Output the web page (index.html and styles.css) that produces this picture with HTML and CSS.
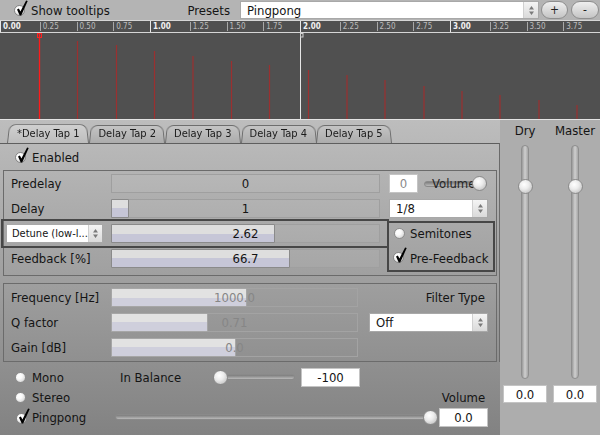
FILE: index.html
```html
<!DOCTYPE html>
<html>
<head>
<meta charset="utf-8">
<link rel="stylesheet" href="styles.css">
</head>
<body>
<svg class="defs" aria-hidden="true">
  <defs>
    <symbol id="tick" viewBox="0 0 14 16">
      <path d="M3 9.5 L4.9 8.6 L6.4 11.5 L12.1 0.4 L13.7 1.1 L7.2 15.6 L5.7 15.6 Z" fill="#000"/>
    </symbol>
    <symbol id="ud" viewBox="0 0 7 11">
      <path d="M3.5 1 L6 4.4 H1 Z M3.5 10 L6 6.6 H1 Z" fill="#7a7a7a"/>
    </symbol>
  </defs>
</svg>
<div class="app">
  <header class="topbar">
    <label class="check tooltips"><span class="cb"><span class="ball"></span><svg class="tick"><use href="#tick"/></svg></span><span>Show tooltips</span></label>
    <span class="presets">Presets</span>
    <div class="combo preset-combo"><span class="combo-text">Pingpong</span><span class="combo-arrow"><svg class="ud"><use href="#ud"/></svg></span></div>
    <button class="pill">+</button>
    <button class="pill">-</button>
  </header>

  <section class="timeline">
    <div class="ruler">
      <div class="major"><span class="cell big">0.00</span><span class="cell minor">0.25</span><span class="cell minor">0.50</span><span class="cell minor">0.75</span></div>
      <div class="major"><span class="cell big">1.00</span><span class="cell minor">1.25</span><span class="cell minor">1.50</span><span class="cell minor">1.75</span></div>
      <div class="major"><span class="cell big">2.00</span><span class="cell minor">2.25</span><span class="cell minor">2.50</span><span class="cell minor">2.75</span></div>
      <div class="major"><span class="cell big">3.00</span><span class="cell minor">3.25</span><span class="cell minor">3.50</span><span class="cell minor">3.75</span></div>
    </div>
    <svg class="graph" width="600" height="86" viewBox="0 0 600 86">
      <g stroke="#9b3030" stroke-width="1.2">
        <line x1="77.5" y1="8" x2="77.5" y2="86"/>
        <line x1="116.5" y1="12" x2="116.5" y2="86"/>
        <line x1="154.5" y1="18" x2="154.5" y2="86"/>
        <line x1="193" y1="23" x2="193" y2="86"/>
        <line x1="231.5" y1="28" x2="231.5" y2="86"/>
        <line x1="269.5" y1="32" x2="269.5" y2="86"/>
        <line x1="308.5" y1="37" x2="308.5" y2="86"/>
        <line x1="347" y1="42" x2="347" y2="86"/>
        <line x1="385" y1="47" x2="385" y2="86"/>
        <line x1="424" y1="53" x2="424" y2="86"/>
        <line x1="462" y1="58" x2="462" y2="86"/>
        <line x1="500" y1="62" x2="500" y2="86"/>
        <line x1="539" y1="67" x2="539" y2="86"/>
        <line x1="577" y1="72" x2="577" y2="86"/>
      </g>
      <line x1="39.5" y1="0" x2="39.5" y2="86" stroke="#ff1a1a" stroke-width="1.3"/>
      <rect x="37.5" y="0.5" width="4" height="4" fill="none" stroke="#ff2020" stroke-width="1"/>
      <line x1="300.5" y1="0" x2="300.5" y2="86" stroke="#e6e6e6" stroke-width="1"/>
      <rect x="300.5" y="0.5" width="2.5" height="3.5" fill="none" stroke="#d0d0d0" stroke-width="1"/>
    </svg>
    <div class="timeline-edge"></div>
  </section>

  <main class="main">
    <div class="left">
      <nav class="tabs">
        <span class="tab active">*Delay Tap 1</span>
        <span class="tab">Delay Tap 2</span>
        <span class="tab">Delay Tap 3</span>
        <span class="tab">Delay Tap 4</span>
        <span class="tab">Delay Tap 5</span>
      </nav>
      <div class="pane">
        <label class="check enabled"><span class="cb"><span class="ball"></span><svg class="tick"><use href="#tick"/></svg></span><span>Enabled</span></label>

        <div class="group g1">
          <div class="row">
            <span class="lbl">Predelay</span>
            <div class="bar"><span class="val">0</span></div>
            <div class="spin spin-small dim">0</div>
            <div class="mini-slider">
              <span class="groove"></span>
              <span class="mini-text">Volume</span>
              <span class="handle"></span>
            </div>
          </div>
          <div class="row">
            <span class="lbl">Delay</span>
            <div class="bar"><span class="fill" style="width:18px"></span><span class="val">1</span></div>
            <div class="combo delay-combo"><span class="combo-text">1/8</span><span class="combo-arrow"><svg class="ud"><use href="#ud"/></svg></span></div>
          </div>
          <div class="split">
            <div class="split-left">
              <div class="row detune">
                <div class="combo detune-combo"><span class="combo-text">Detune (low-l...</span><span class="combo-arrow"><svg class="ud"><use href="#ud"/></svg></span></div>
                <div class="bar"><span class="fill" style="width:164px"></span><span class="val">2.62</span></div>
              </div>
              <div class="row">
                <span class="lbl">Feedback [%]</span>
                <div class="bar"><span class="fill" style="width:179px"></span><span class="val">66.7</span></div>
              </div>
            </div>
            <div class="frame-right">
              <label class="check opt"><span class="radio"></span><span>Semitones</span></label>
              <label class="check opt"><span class="cb"><span class="ball"></span><svg class="tick"><use href="#tick"/></svg></span><span>Pre-Feedback</span></label>
            </div>
          </div>
        </div>

        <div class="group g2">
          <div class="row">
            <span class="lbl">Frequency [Hz]</span>
            <div class="bar off"><span class="fill" style="width:136px"></span><span class="val">1000.0</span></div>
            <span class="filter-label">Filter Type</span>
          </div>
          <div class="row">
            <span class="lbl">Q factor</span>
            <div class="bar off"><span class="fill" style="width:97px"></span><span class="val">0.71</span></div>
            <div class="combo filter-combo"><span class="combo-text">Off</span><span class="combo-arrow"><svg class="ud"><use href="#ud"/></svg></span></div>
          </div>
          <div class="row">
            <span class="lbl">Gain [dB]</span>
            <div class="bar off"><span class="fill" style="width:125px"></span><span class="val">0.0</span></div>
          </div>
        </div>
      </div>

      <div class="bottom">
        <div class="brow">
          <label class="check mode"><span class="radio"></span><span>Mono</span></label>
          <span class="balance-label">In Balance</span>
          <div class="hslider balance"><span class="groove"></span><span class="handle start"></span></div>
          <div class="spin balance-spin">-100</div>
        </div>
        <div class="brow">
          <label class="check mode"><span class="radio"></span><span>Stereo</span></label>
          <span class="volume-label">Volume</span>
        </div>
        <div class="brow">
          <label class="check mode ping"><span class="cb"><span class="ball"></span><svg class="tick"><use href="#tick"/></svg></span><span>Pingpong</span></label>
          <div class="hslider volume"><span class="groove"></span><span class="handle end"></span></div>
          <div class="spin volume-spin">0.0</div>
        </div>
      </div>
    </div>

    <aside class="mixer">
      <div class="mix-col">
        <span class="mix-label">Dry</span>
        <div class="vslider"><span class="handle"></span></div>
        <div class="spin mix-spin">0.0</div>
      </div>
      <div class="mix-col">
        <span class="mix-label">Master</span>
        <div class="vslider"><span class="handle"></span></div>
        <div class="spin mix-spin">0.0</div>
      </div>
    </aside>
  </main>
</div>
</body>
</html>
```

FILE: styles.css
```css
* { box-sizing: border-box; margin: 0; padding: 0; }

body {
  width: 600px;
  height: 435px;
  overflow: hidden;
  font-family: "DejaVu Sans Condensed", "DejaVu Sans", sans-serif;
  font-stretch: condensed;
  font-size: 13px;
  color: #141414;
  background: #b4b4b4;
}

.defs { position: absolute; width: 0; height: 0; }

.app { display: flex; flex-direction: column; height: 435px; }

/* ---------- check / radio ---------- */
.check { display: flex; align-items: center; }

.cb {
  display: grid;
  width: 14px;
  height: 16px;
  flex: none;
}
.cb > * { grid-area: 1 / 1; }
.ball, .radio {
  display: block;
  width: 11px;
  height: 11px;
  border-radius: 50%;
  border: 1px solid #868686;
  background: radial-gradient(circle at 35% 32%, #ffffff 0%, #fafafa 35%, #e0e0e0 68%, #a9a9a9 100%);
}
.ball { align-self: end; justify-self: start; }
.tick { width: 14px; height: 16px; }
.radio { flex: none; border-color: #8e8e8e; }

/* ---------- top bar ---------- */
.topbar {
  height: 20px;
  display: flex;
  align-items: center;
  background: #b4b4b4;
  padding-right: 1px;
}

.tooltips { margin-left: 14px; }
.tooltips .cb { margin-right: 3px; margin-top: -4px; }

.presets { margin-left: auto; margin-right: 10px; }

.combo {
  display: flex;
  align-items: stretch;
  background: #fff;
  border: 1px solid #a8a8a8;
  height: 19px;
}
.combo-text { flex: 1; padding-left: 6px; display: flex; align-items: center; white-space: nowrap; }
.combo-arrow {
  width: 15px;
  display: flex;
  align-items: center;
  justify-content: center;
  background: linear-gradient(#f4f4f4, #dadada);
  border-left: 1px solid #d0d0d0;
}
.ud { width: 7px; height: 11px; }

.preset-combo { width: 299px; height: 18px; margin-right: 2px; }

.pill {
  width: 27px;
  height: 18px;
  border-radius: 9px;
  border: 1px solid #8e8e8e;
  background: linear-gradient(#efefef, #c4c4c4);
  font-family: inherit;
  font-size: 12px;
  color: #222;
  line-height: 16px;
}
.pill + .pill { margin-left: 3px; width: 28px; }

/* ---------- timeline ---------- */
.timeline { background: #505050; height: 100px; }

.ruler {
  display: flex;
  height: 13px;
  border-top: 1px solid #d6d6d6;
  border-bottom: 1px solid #d6d6d6;
  font-size: 8px;
  color: #bdbdbd;
}
.major { width: 150px; display: flex; border-left: 1px solid #e8e8e8; }
.cell { flex: 1; display: flex; align-items: center; padding-left: 2px; line-height: 11px; }
.cell.big { font-weight: bold; color: #f2f2f2; padding-left: 2px; }
.cell.minor { padding-left: 0; }
.cell.minor::before {
  content: "";
  width: 1px;
  height: 9px;
  background: #a8a8a8;
  margin-right: 2px;
}

.graph { display: block; }
.timeline-edge { height: 1px; background: #e2e2e2; }

/* ---------- main ---------- */
.main { flex: 1; display: flex; min-height: 0; }

.left {
  width: 500px;
  display: flex;
  flex-direction: column;
  background: linear-gradient(#bdbdbd, #828282);
}

.tabs {
  height: 23px;
  display: flex;
  align-items: flex-end;
  padding-left: 7px;
}
.tab {
  position: relative;
  z-index: 0;
  height: 19px;
  padding: 0 9px;
  font-size: 11px;
  display: flex;
  align-items: center;
  color: #1a1a1a;
  white-space: nowrap;
}
.tab::before {
  content: "";
  position: absolute;
  inset: 0;
  border: 1px solid #6e6e6e;
  border-bottom: 0;
  border-radius: 7px 7px 0 0;
  background: linear-gradient(#c4c4c4, #acacac);
  transform: perspective(30px) rotateX(5deg);
  transform-origin: bottom;
  z-index: -1;
}
.tab.active { height: 20px; z-index: 1; padding: 0 10px; }
.tab.active::before { background: linear-gradient(#d0d0d0, #bdbdbd); }

.pane {
  flex: none;
  border-top: 1px solid #5e5e5e;
  border-right: 1px solid #6a6a6a;
}

.enabled { height: 26px; padding-left: 15px; }
.enabled .cb { margin-right: 3px; margin-top: -4px; }

.group {
  margin-left: 3px;
  width: 494px;
  border: 1px solid #6b6b6b;
  display: flex;
  flex-direction: column;
  gap: 6px;
}
.g1 { padding: 3px 0 7px; }
.g2 { margin-top: 7px; padding: 4px 0 4px; }

.row { display: flex; align-items: center; height: 19px; flex: none; }
.lbl { width: 107px; padding-left: 7px; flex: none; white-space: nowrap; }

.bar {
  display: grid;
  width: 269px;
  height: 19px;
  flex: none;
  box-shadow: inset 0 0 0 1px #9f9f9f;
  background: rgba(255, 255, 255, 0.06);
}
.bar > * { grid-area: 1 / 1; }
.fill {
  justify-self: start;
  height: 19px;
  border: 1px solid #8a8a8a;
  border-radius: 1px;
  background: linear-gradient(#dedede 50%, #c6c6d7 50%);
}
.val { justify-self: center; align-self: center; line-height: 17px; }

.bar.off { width: 247px; box-shadow: inset 0 0 0 1px #a3a3a3; background: none; }
.bar.off .fill { border-color: #a6a6a6; background: linear-gradient(#e2e2e2 50%, #cfcfdc 50%); }
.bar.off .val { color: #868686; }

.spin {
  background: #fff;
  border: 1px solid #c4c4c4;
  display: flex;
  align-items: center;
  justify-content: center;
  height: 19px;
  flex: none;
}
.spin-small { width: 29px; margin-left: 9px; }
.dim { color: #8a8a8a; }

.mini-slider {
  display: grid;
  width: 63px;
  margin-left: 6px;
  align-items: center;
}
.mini-slider > * { grid-area: 1 / 1; }
.mini-slider .groove { height: 6px; }
.mini-text { padding-left: 8px; color: #262626; }
.mini-slider .handle { justify-self: end; }

.groove {
  display: block;
  height: 6px;
  border-radius: 3px;
  background: linear-gradient(#7c7c7c, #b9b9b9);
  border: 1px solid #8a8a8a;
}
.handle {
  display: block;
  width: 15px;
  height: 15px;
  border-radius: 50%;
  border: 1px solid #8a8a8a;
  background: radial-gradient(circle at 40% 35%, #ffffff 0%, #ececec 40%, #b4b4b4 100%);
  flex: none;
}

.delay-combo { width: 99px; margin-left: 9px; }

.split { display: flex; }
.split-left { width: 383px; display: flex; flex-direction: column; gap: 6px; }
.detune { outline: 2px solid #474747; outline-offset: 3px; margin-left: 2px; width: 378px; }
.detune-combo { width: 97px; font-size: 11px; margin-right: 8px; }
.detune-combo .combo-text { padding-left: 5px; }

.frame-right {
  width: 108px;
  margin: -3px 0 -4px;
  border: 2px solid #474747;
  border-left-color: transparent;
  position: relative;
  display: flex;
  flex-direction: column;
  gap: 6px;
  padding: 1px 0 0 5px;
}
.frame-right::before {
  content: "";
  position: absolute;
  left: -2px;
  top: 23px;
  bottom: -2px;
  width: 2px;
  background: #474747;
}
.opt { height: 19px; }
.opt .radio { margin-right: 5px; }
.opt .cb { margin-left: -1px; margin-right: 3px; margin-top: -7px; }

.filter-label { margin-left: auto; margin-right: 11px; }
.filter-combo { width: 119px; margin-left: 11px; }

/* ---------- bottom ---------- */
.bottom { flex: 1; display: flex; flex-direction: column; padding-top: 5px; }
.brow { display: flex; align-items: center; height: 20px; flex: none; }
.mode { width: 120px; padding-left: 15px; flex: none; }
.mode .radio { margin-right: 6px; }
.ping { width: 115px; padding-left: 16px; }
.ping .cb { margin-right: 2px; margin-top: -3px; }

.balance-label { width: 93px; flex: none; }
.hslider { display: grid; align-items: center; flex: none; }
.hslider > * { grid-area: 1 / 1; }
.hslider .groove { height: 6px; }
.handle.start { justify-self: start; }
.handle.end { justify-self: end; }
.balance { width: 82px; }
.balance-spin { width: 59px; margin-left: 6px; }
.volume { width: 323px; }
.volume-spin { width: 49px; margin-left: 1px; }
.volume-label { margin-left: auto; width: 49px; margin-right: 12px; text-align: center; }

/* ---------- mixer ---------- */
.mixer { flex: 1; display: flex; background: #adadad; }
.mix-col { width: 50px; display: flex; flex-direction: column; align-items: center; padding-top: 3px; }
.mix-label { line-height: 16px; }
.vslider {
  margin-top: 6px;
  width: 8px;
  height: 234px;
  border-radius: 4px;
  border: 1px solid #8e8e8e;
  background: linear-gradient(90deg, #9a9a9a, #cfcfcf 50%, #a6a6a6);
  display: flex;
  flex-direction: column;
  align-items: center;
  padding-top: 33px;
}
.mix-spin { width: 44px; height: 18px; margin-top: 6px; }
```
